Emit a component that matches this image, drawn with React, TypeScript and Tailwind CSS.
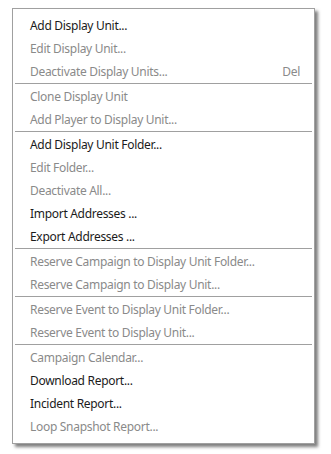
import React from "react";

type Item = { label: string; enabled: boolean; shortcut?: string } | { sep: true };

const items: Item[] = [
  { label: "Add Display Unit...", enabled: true },
  { label: "Edit Display Unit...", enabled: false },
  { label: "Deactivate Display Units...", enabled: false, shortcut: "Del" },
  { sep: true },
  { label: "Clone Display Unit", enabled: false },
  { label: "Add Player to Display Unit...", enabled: false },
  { sep: true },
  { label: "Add Display Unit Folder...", enabled: true },
  { label: "Edit Folder...", enabled: false },
  { label: "Deactivate All...", enabled: false },
  { label: "Import Addresses ...", enabled: true },
  { label: "Export Addresses ...", enabled: true },
  { sep: true },
  { label: "Reserve Campaign to Display Unit Folder...", enabled: false },
  { label: "Reserve Campaign to Display Unit...", enabled: false },
  { sep: true },
  { label: "Reserve Event to Display Unit Folder...", enabled: false },
  { label: "Reserve Event to Display Unit...", enabled: false },
  { sep: true },
  { label: "Campaign Calendar...", enabled: false },
  { label: "Download Report...", enabled: true },
  { label: "Incident Report...", enabled: true },
  { label: "Loop Snapshot Report...", enabled: false },
];

export default function App() {
  return (
    <div className="w-[331px] h-[454px] bg-white pt-[8px] pl-[12px]">
      <div
        className="w-[303px] h-[436px] border border-[#a0a0a0] bg-white pt-[5px] pb-[5px] shadow-[3px_3px_3px_rgba(0,0,0,0.5)] text-[12px] tracking-[-0.3px]"
        style={{ fontFamily: '"Noto Sans", "Open Sans", sans-serif' }}
      >
        {items.map((it, i) =>
          "sep" in it ? (
            <div key={i} className="h-[2px] mx-[2px]">
              <div className="h-px bg-[#a0a0a0]" />
            </div>
          ) : (
            <div
              key={i}
              className={`h-[23px] leading-[23px] flex justify-between pl-[17px] pr-[14px] whitespace-nowrap ${
                it.enabled ? "text-[#1b1b1b]" : "text-[#8a8a8a]"
              }`}
            >
              <span>{it.label}</span>
              {it.shortcut && <span>{it.shortcut}</span>}
            </div>
          )
        )}
      </div>
    </div>
  );
}
